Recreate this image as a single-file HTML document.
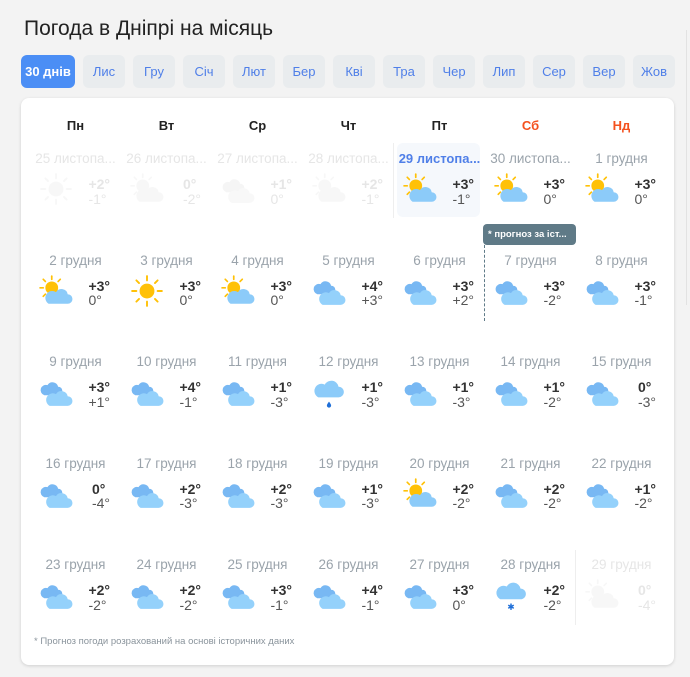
<!DOCTYPE html>
<html><head><meta charset="utf-8"><style>
*{margin:0;padding:0;box-sizing:border-box}
body{width:690px;height:677px;background:#f3f3f3;font-family:"Liberation Sans","Noto Sans CJK SC",sans-serif;position:relative;overflow:hidden}
h1{position:absolute;left:24px;top:17px;font-size:21px;font-weight:normal;color:#222}
.tab{position:absolute;top:55px;height:33px;width:42px;border-radius:6px;background:#e9ecee;color:#4f7fe8;font-size:13px;text-align:center;line-height:33px}
.tab.a{background:#4b8ef5;color:#fff;font-weight:bold;width:54px;left:21px}
.card{position:absolute;left:21px;top:98px;width:653px;height:567px;background:#fff;border-radius:8px;box-shadow:0 1px 3px rgba(0,0,0,.15)}
.dn{position:absolute;top:118px;width:91px;text-align:center;font-size:13px;font-weight:bold;color:#222}
.grid{position:absolute;left:30px;top:143px;display:grid;grid-template-columns:repeat(7,91px);grid-auto-rows:101.5px}
.c{position:relative}
.d{position:absolute;left:-4px;right:-4px;top:8px;text-align:center;font-size:13.5px;color:#9aa3ab;white-space:nowrap}
.c svg{position:absolute;left:9px;top:29px;width:34px;height:34px}
.t{position:absolute;right:11px;top:34px;text-align:left;font-size:14px;line-height:14.5px;color:#555}
.t b{display:block;color:#333}
.f .d,.f .t,.f .t b{color:#e6e6e6}
.f svg{opacity:.12;filter:grayscale(1)}
.today .d{color:#4f7fe8;font-weight:bold;font-size:13px}
</style></head><body>
<svg width="0" height="0" style="position:absolute">
<defs>
<symbol id="sun" viewBox="0 0 32 32"><g stroke="#ffc107" stroke-width="1.8" stroke-linecap="round"><line x1="16" y1="2" x2="16" y2="6"/><line x1="16" y1="26" x2="16" y2="30"/><line x1="2" y1="16" x2="6" y2="16"/><line x1="26" y1="16" x2="30" y2="16"/><line x1="6" y1="6" x2="8.5" y2="8.5"/><line x1="26" y1="6" x2="23.5" y2="8.5"/><line x1="6" y1="26" x2="8.5" y2="23.5"/><line x1="26" y1="26" x2="23.5" y2="23.5"/></g><circle cx="16" cy="16" r="7" fill="#ffc107"/></symbol>
<symbol id="pc" viewBox="0 0 32 32"><g stroke="#ffc107" stroke-width="1.6" stroke-linecap="round"><line x1="12" y1="2" x2="12" y2="5"/><line x1="1" y1="13" x2="4" y2="13"/><line x1="4" y1="5" x2="6" y2="7"/><line x1="20" y1="5" x2="18" y2="7"/><line x1="4" y1="21" x2="6" y2="19"/></g><circle cx="12" cy="13" r="6" fill="#ffc107"/><path d="M9 28h18a4.5 4.5 0 0 0 0-9 6 6 0 0 0-11-2 5 5 0 0 0-7 11z" fill="#8ccbf9"/></symbol>
<symbol id="cl" viewBox="0 0 32 32"><path d="M5 19h13a4 4 0 0 0 0-8 5.5 5.5 0 0 0-10-1.5A4.7 4.7 0 0 0 5 19z" fill="#78b8f3"/><path d="M10 29h17a4.5 4.5 0 0 0 0-9 6 6 0 0 0-11-2 5 5 0 0 0-6 11z" fill="#94d1fb"/></symbol>
<symbol id="rn" viewBox="0 0 32 32"><path d="M6 21h19a5 5 0 0 0 0-10 7 7 0 0 0-13-2 6 6 0 0 0-6 12z" fill="#8ccbf9"/><path d="M16 25c-1.5 2-2 3-2 3.7a2 2 0 0 0 4 0c0-.7-.5-1.7-2-3.7z" fill="#1f6fd8"/></symbol>
<symbol id="sn" viewBox="0 0 32 32"><path d="M6 20h19a5 5 0 0 0 0-10 7 7 0 0 0-13-2 6 6 0 0 0-6 12z" fill="#8ccbf9"/><g stroke="#1f6fd8" stroke-width="1.4"><line x1="16" y1="24" x2="16" y2="30"/><line x1="13.4" y1="25.5" x2="18.6" y2="28.5"/><line x1="13.4" y1="28.5" x2="18.6" y2="25.5"/></g></symbol>
</defs></svg>
<h1>Погода в Дніпрі на місяць</h1>
<div class="tab a">30 днів</div>
<div class="tab" style="left:83px">Лис</div><div class="tab" style="left:133px">Гру</div><div class="tab" style="left:183px">Січ</div><div class="tab" style="left:233px">Лют</div><div class="tab" style="left:283px">Бер</div><div class="tab" style="left:333px">Кві</div><div class="tab" style="left:383px">Тра</div><div class="tab" style="left:433px">Чер</div><div class="tab" style="left:483px">Лип</div><div class="tab" style="left:533px">Сер</div><div class="tab" style="left:583px">Вер</div><div class="tab" style="left:633px">Жов</div>
<div style="position:absolute;left:686px;top:30px;width:1px;height:275px;background:#e2e2e2"></div>
<div class="card"></div>
<div class="dn" style="left:30px">Пн</div><div class="dn" style="left:121px">Вт</div><div class="dn" style="left:212px">Ср</div><div class="dn" style="left:303px">Чт</div><div class="dn" style="left:394px">Пт</div><div class="dn" style="left:485px;color:#f4511e">Сб</div><div class="dn" style="left:576px;color:#f4511e">Нд</div>
<div style="position:absolute;left:397px;top:143px;width:83px;height:74px;background:#f5f8fc;border-radius:6px"></div>
<div style="position:absolute;left:393px;top:143px;width:1px;height:75px;background:#eee"></div>
<div style="position:absolute;left:575px;top:550px;width:1px;height:75px;background:#eee"></div>
<div style="position:absolute;left:484px;top:245px;height:76px;border-left:1px dashed #5f7a87"></div>
<div style="position:absolute;left:483px;top:224px;width:93px;height:21px;background:#5f7a87;border-radius:4px;color:#fff;font-size:9.5px;font-weight:bold;line-height:21px;padding-left:5px;white-space:nowrap;overflow:hidden">* прогноз за іст...</div>
<div class="grid">
<div class="c f"><div class="d">25 листопа...</div><svg><use href="#sun"/></svg><div class="t"><b>+2°</b>-1°</div></div>
<div class="c f"><div class="d">26 листопа...</div><svg><use href="#pc"/></svg><div class="t"><b>0°</b>-2°</div></div>
<div class="c f"><div class="d">27 листопа...</div><svg><use href="#cl"/></svg><div class="t"><b>+1°</b>0°</div></div>
<div class="c f"><div class="d">28 листопа...</div><svg><use href="#pc"/></svg><div class="t"><b>+2°</b>-1°</div></div>
<div class="c today"><div class="d">29 листопа...</div><svg><use href="#pc"/></svg><div class="t"><b>+3°</b>-1°</div></div>
<div class="c"><div class="d">30 листопа...</div><svg><use href="#pc"/></svg><div class="t"><b>+3°</b>0°</div></div>
<div class="c"><div class="d">1 грудня</div><svg><use href="#pc"/></svg><div class="t"><b>+3°</b>0°</div></div>

<div class="c"><div class="d">2 грудня</div><svg><use href="#pc"/></svg><div class="t"><b>+3°</b>0°</div></div>
<div class="c"><div class="d">3 грудня</div><svg><use href="#sun"/></svg><div class="t"><b>+3°</b>0°</div></div>
<div class="c"><div class="d">4 грудня</div><svg><use href="#pc"/></svg><div class="t"><b>+3°</b>0°</div></div>
<div class="c"><div class="d">5 грудня</div><svg><use href="#cl"/></svg><div class="t"><b>+4°</b>+3°</div></div>
<div class="c"><div class="d">6 грудня</div><svg><use href="#cl"/></svg><div class="t"><b>+3°</b>+2°</div></div>
<div class="c"><div class="d">7 грудня</div><svg><use href="#cl"/></svg><div class="t"><b>+3°</b>-2°</div></div>
<div class="c"><div class="d">8 грудня</div><svg><use href="#cl"/></svg><div class="t"><b>+3°</b>-1°</div></div>

<div class="c"><div class="d">9 грудня</div><svg><use href="#cl"/></svg><div class="t"><b>+3°</b>+1°</div></div>
<div class="c"><div class="d">10 грудня</div><svg><use href="#cl"/></svg><div class="t"><b>+4°</b>-1°</div></div>
<div class="c"><div class="d">11 грудня</div><svg><use href="#cl"/></svg><div class="t"><b>+1°</b>-3°</div></div>
<div class="c"><div class="d">12 грудня</div><svg><use href="#rn"/></svg><div class="t"><b>+1°</b>-3°</div></div>
<div class="c"><div class="d">13 грудня</div><svg><use href="#cl"/></svg><div class="t"><b>+1°</b>-3°</div></div>
<div class="c"><div class="d">14 грудня</div><svg><use href="#cl"/></svg><div class="t"><b>+1°</b>-2°</div></div>
<div class="c"><div class="d">15 грудня</div><svg><use href="#cl"/></svg><div class="t"><b>0°</b>-3°</div></div>

<div class="c"><div class="d">16 грудня</div><svg><use href="#cl"/></svg><div class="t"><b>0°</b>-4°</div></div>
<div class="c"><div class="d">17 грудня</div><svg><use href="#cl"/></svg><div class="t"><b>+2°</b>-3°</div></div>
<div class="c"><div class="d">18 грудня</div><svg><use href="#cl"/></svg><div class="t"><b>+2°</b>-3°</div></div>
<div class="c"><div class="d">19 грудня</div><svg><use href="#cl"/></svg><div class="t"><b>+1°</b>-3°</div></div>
<div class="c"><div class="d">20 грудня</div><svg><use href="#pc"/></svg><div class="t"><b>+2°</b>-2°</div></div>
<div class="c"><div class="d">21 грудня</div><svg><use href="#cl"/></svg><div class="t"><b>+2°</b>-2°</div></div>
<div class="c"><div class="d">22 грудня</div><svg><use href="#cl"/></svg><div class="t"><b>+1°</b>-2°</div></div>

<div class="c"><div class="d">23 грудня</div><svg><use href="#cl"/></svg><div class="t"><b>+2°</b>-2°</div></div>
<div class="c"><div class="d">24 грудня</div><svg><use href="#cl"/></svg><div class="t"><b>+2°</b>-2°</div></div>
<div class="c"><div class="d">25 грудня</div><svg><use href="#cl"/></svg><div class="t"><b>+3°</b>-1°</div></div>
<div class="c"><div class="d">26 грудня</div><svg><use href="#cl"/></svg><div class="t"><b>+4°</b>-1°</div></div>
<div class="c"><div class="d">27 грудня</div><svg><use href="#cl"/></svg><div class="t"><b>+3°</b>0°</div></div>
<div class="c"><div class="d">28 грудня</div><svg><use href="#sn"/></svg><div class="t"><b>+2°</b>-2°</div></div>
<div class="c f"><div class="d">29 грудня</div><svg><use href="#pc"/></svg><div class="t"><b>0°</b>-4°</div></div>
</div>
<div style="position:absolute;left:34px;top:636px;font-size:9.5px;color:#8a949c">* Прогноз погоди розрахований на основі історичних даних</div>
</body></html>
